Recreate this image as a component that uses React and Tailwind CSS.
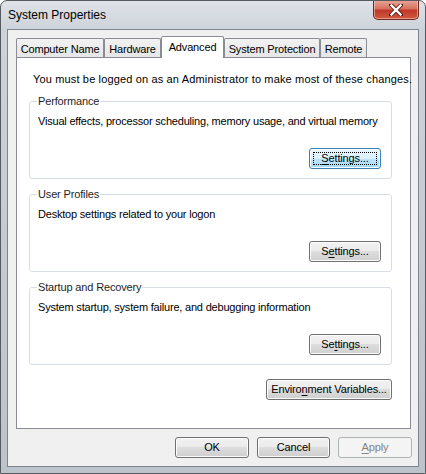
import React from "react";

const font = { fontFamily: '"Liberation Sans", Arial, sans-serif' };

function Btn({ children, w = "w-[72px]", focused = false, disabled = false }) {
  let cls =
    "h-[21px] rounded-[3px] border text-[11px] leading-none whitespace-nowrap flex items-center justify-center shadow-[inset_0_0_0_1px_#fcfcfc] " +
    w +
    " ";
  if (disabled) {
    cls += "border-[#adb2b5] bg-[#f4f4f4] text-[#838383] shadow-none";
  } else if (focused) {
    cls +=
      "border-[#3c7fb1] bg-[linear-gradient(#eaf6fd_0%,#d9f0fc_50%,#bee6fd_50%,#a7d9f5_100%)] text-black";
  } else {
    cls +=
      "border-[#707070] bg-[linear-gradient(#f2f2f2_0%,#ebebeb_50%,#dddddd_50%,#cfcfcf_100%)] text-black";
  }
  return (
    <div className={cls}>
      {focused ? (
        <div className="w-[calc(100%-6px)] h-[calc(100%-6px)] border border-dotted border-black flex items-center justify-center">
          {children}
        </div>
      ) : (
        children
      )}
    </div>
  );
}

function Group({ title, desc, label, focused, mt = "mt-[8px]" }) {
  return (
    <fieldset
      className={
        "border border-[#d5dfe5] rounded-[3px] px-[8px] pb-[9px] pt-0 " + mt
      }
    >
      <legend className="text-[11px] leading-[15px] px-[1px] -ml-[1px] text-[#1e1e1e] whitespace-nowrap">
        {title}
      </legend>
      <div className="text-[11px] leading-[15px] mt-[5px] text-black whitespace-nowrap tracking-[-0.2px]">{desc}</div>
      <div className="flex justify-end mt-[19px] pr-[2px]">
        <Btn focused={focused}>{label}</Btn>
      </div>
    </fieldset>
  );
}

function Tab({ children, w, selected }) {
  if (selected) {
    return (
      <div
        className={
          "h-[22px] -mb-px relative z-10 bg-white border border-b-0 border-[#898c95] rounded-t-[2px] flex items-start justify-center pt-[3px] text-[11px] leading-[15px] whitespace-nowrap " +
          w
        }
      >
        {children}
      </div>
    );
  }
  return (
    <div
      className={
        "h-[19px] border border-b-0 border-[#898c95] rounded-t-[2px] bg-[linear-gradient(#f2f2f2,#e6e6e6)] flex items-center justify-center pt-[2px] text-[11px] leading-[15px] whitespace-nowrap " +
        w
      }
    >
      {children}
    </div>
  );
}

export default function App() {
  return (
    <div
      style={font}
      className="w-[426px] h-[474px] rounded-t-[7px] border border-[#565b62] bg-[linear-gradient(180deg,#dfe3e8_0%,#cdd3da_6%,#c4cbd3_50%,#bcc3cb_100%)] flex flex-col text-black overflow-hidden tracking-[-0.15px]"
    >
      {/* title bar */}
      <div className="h-[28px] flex items-start justify-between pl-[7px] pr-[6px] shrink-0">
        <div className="text-[12px] leading-[15px] mt-[7px] text-black tracking-normal">System Properties</div>
        <div className="w-[46px] h-[20px] -mt-px rounded-b-[5px] border border-t-0 border-[#6d2a22] bg-[linear-gradient(#e9a99b_0%,#d7725f_45%,#c0392a_55%,#d25a3f_100%)] flex items-center justify-center shadow-[inset_0_0_0_1px_rgba(255,220,210,0.5)]">
          <svg width="14" height="12" viewBox="0 0 14 12">
            <path d="M2 1 L12 11 M12 1 L2 11" stroke="#5a1a12" strokeWidth="4" strokeLinecap="square" />
            <path d="M2.5 1.5 L11.5 10.5 M11.5 1.5 L2.5 10.5" stroke="#ffffff" strokeWidth="2.4" strokeLinecap="square" />
          </svg>
        </div>
      </div>

      {/* client area */}
      <div className="mx-[6px] h-[438px] border border-[#7d858f] bg-[#f0f0f0] pl-[8px] pr-[6px] pt-[6px] shrink-0">
        <div className="flex items-end h-[21px]">
          <Tab w="w-[88px]">Computer Name</Tab>
          <Tab w="w-[57px]">Hardware</Tab>
          <Tab w="w-[63px]" selected>
            Advanced
          </Tab>
          <Tab w="w-[96px]">System Protection</Tab>
          <Tab w="w-[47px]">Remote</Tab>
        </div>
        <div className="w-[395px] h-[372px] bg-white border border-[#898c95] pl-[12px] pr-[18px]">
          <div className="text-[11px] leading-[15px] mt-[14px] pl-[4px] whitespace-nowrap tracking-[0.15px]">
            You must be logged on as an Administrator to make most of these changes.
          </div>
          <Group
            mt="mt-[7px]"
            title="Performance"
            desc="Visual effects, processor scheduling, memory usage, and virtual memory"
            focused
            label={
              <span>
                <u className="underline-offset-2">S</u>ettings...
              </span>
            }
          />
          <Group
            title="User Profiles"
            desc="Desktop settings related to your logon"
            label={
              <span>
                S<u className="underline-offset-2">e</u>ttings...
              </span>
            }
          />
          <Group
            title="Startup and Recovery"
            desc="System startup, system failure, and debugging information"
            label={
              <span>
                Se<u className="underline-offset-2">t</u>tings...
              </span>
            }
          />
          <div className="flex justify-end mt-[14px]">
            <Btn w="w-[126px]">
              <span>
                Enviro<u className="underline-offset-2">n</u>ment Variables...
              </span>
            </Btn>
          </div>
        </div>
        <div className="flex justify-end gap-[8px] mt-[8px] w-[396px]">
          <Btn w="w-[74px]">OK</Btn>
          <Btn w="w-[73px]">Cancel</Btn>
          <Btn w="w-[74px]" disabled>
            <span>
              <u className="underline-offset-2">A</u>pply
            </span>
          </Btn>
        </div>
      </div>
    </div>
  );
}
